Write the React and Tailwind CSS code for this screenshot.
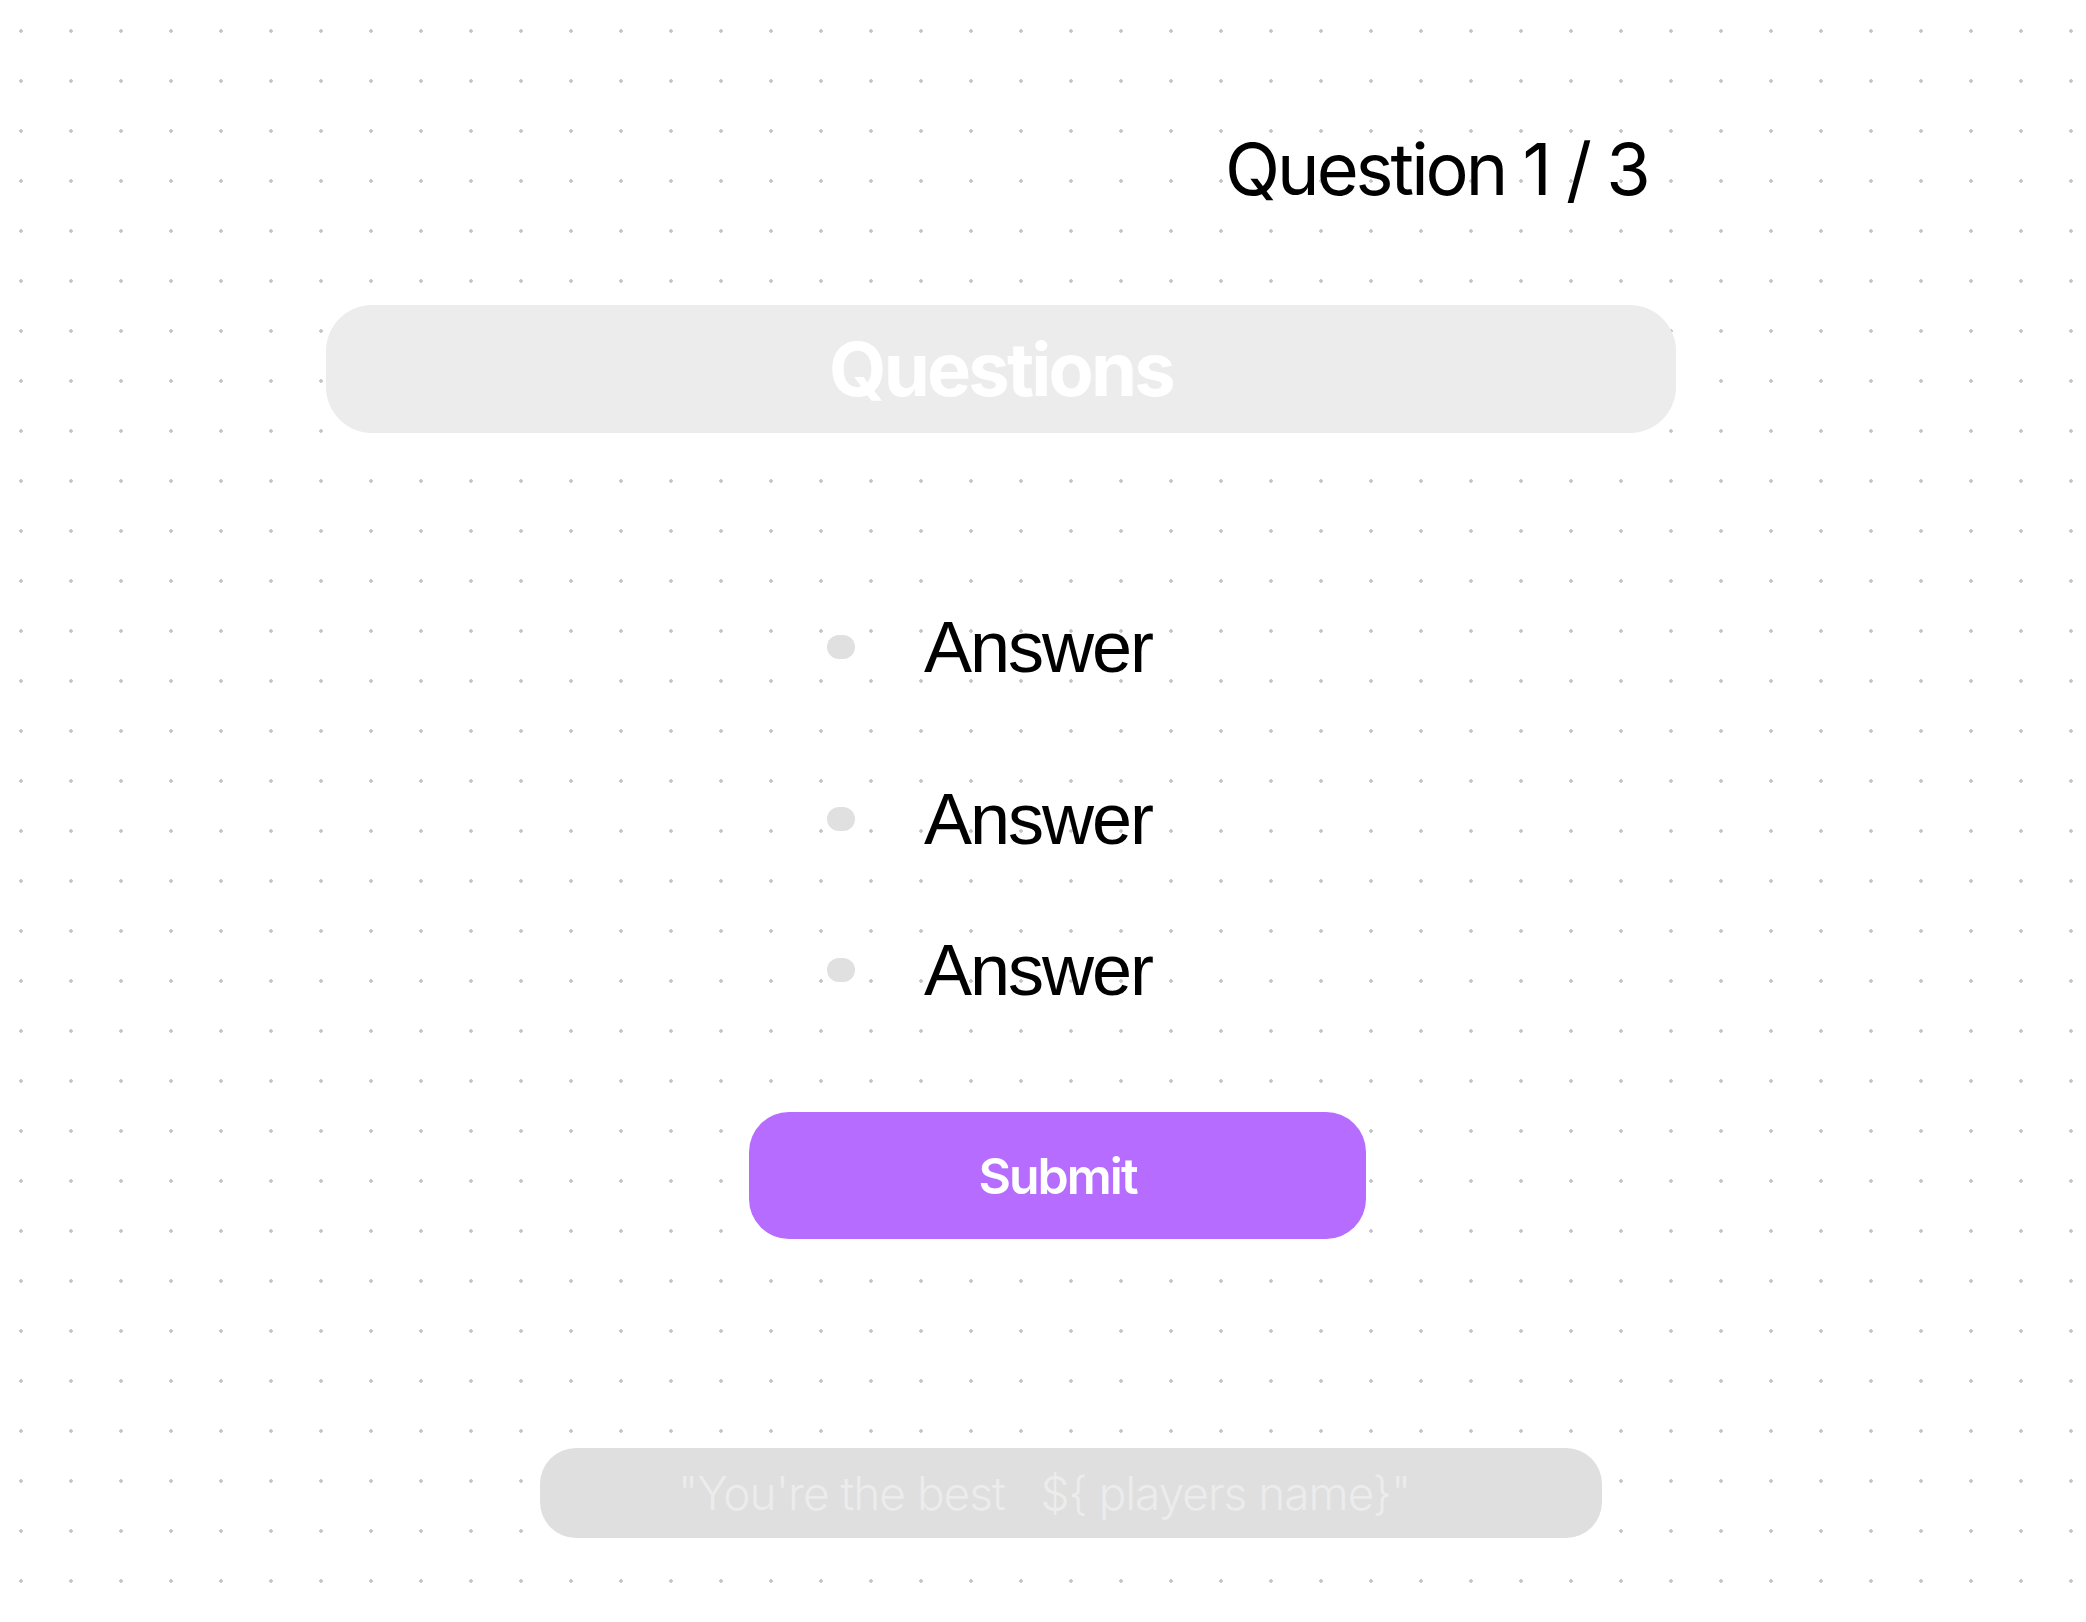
import React, { useState } from 'react';

const answers = ['Answer', 'Answer', 'Answer'];

export default function App() {
  const [picked, setPicked] = useState(null);

  return (
    <div className="min-h-[1622px] w-full bg-white bg-[radial-gradient(circle,#c4c4c4_1.5px,transparent_2px)] [background-size:50px_50px] [background-position:-4px_6px] font-['Inter',sans-serif] text-black">
      <div className="flex flex-col items-start pt-[133px]">
        {/* Progress */}
        <h1 className="ml-[1225px] text-[72px] font-normal leading-[72px] tracking-[-3px]">Question 1 / 3</h1>

        {/* Question banner */}
        <div className="mt-[100px] ml-[326px] flex h-[128px] w-[1350px] items-center justify-center rounded-[46px] bg-[#ececec]">
          <span className="text-[74px] font-bold leading-[74px] tracking-[-2.8px] text-white">Questions</span>
        </div>

        {/* Answers */}
        <div className="mt-[178px] ml-[827px] flex flex-col">
          {answers.map((a, i) => (
            <button
              key={i}
              onClick={() => setPicked(i)}
              className={`flex items-center gap-[69px] ${i === 1 ? 'mt-[100px]' : i === 2 ? 'mt-[79px]' : ''}`}
            >
              <span className={`h-[24px] w-[28px] rounded-full ${picked === i ? 'bg-[#b66cfe]' : 'bg-[#e0e0e0]'}`} />
              <span className="font-['Liberation_Sans',Arial,sans-serif] text-[72px] leading-[72px] tracking-[-2px]">{a}</span>
            </button>
          ))}
        </div>

        {/* Submit */}
        <button className="mt-[106px] ml-[749px] flex h-[127px] w-[617px] items-center justify-center rounded-[40px] bg-[#b66cfe]">
          <span className="text-[50px] font-semibold leading-none tracking-[-2px] text-white">Submit</span>
        </button>

        {/* Result */}
        <div className="mt-[209px] ml-[540px] flex h-[90px] w-[1062px] items-center rounded-[36px] bg-[#dfdfdf] pl-[138px]">
          <span className="whitespace-pre text-[46px] font-light leading-none tracking-[-1px] text-[#ececec]">"You're the best   ${'{'} players name{'}'}"</span>
        </div>
      </div>
    </div>
  );
}
